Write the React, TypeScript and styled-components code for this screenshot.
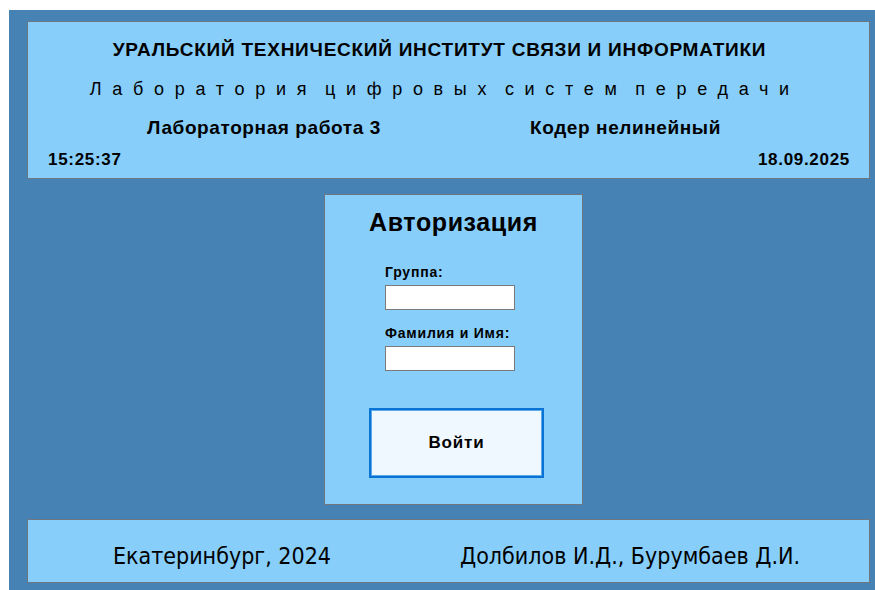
import styled, { createGlobalStyle } from "styled-components";

const GlobalStyle = createGlobalStyle`
  html, body {
    margin: 0;
    padding: 0;
    background: #ffffff;
  }
  body {
    font-family: "Liberation Sans", Arial, sans-serif;
    color: #000000;
  }
`;

const Screen = styled.div`
  width: 875px;
  height: 590px;
  padding: 10px 0 0 9px;
  box-sizing: border-box;
`;

const Window = styled.div`
  height: 580px;
  background: #4682b4;
  padding: 11px 5px 0 18px;
  box-sizing: border-box;
  display: flex;
  flex-direction: column;
`;

const Panel = styled.div`
  background: #87cefa;
  border: 1px solid #6d7680;
  box-sizing: border-box;
`;

const Header = styled(Panel)`
  height: 158px;
  display: flex;
  flex-direction: column;
`;

const CenterLine = styled.div<{ top: number }>`
  display: flex;
  justify-content: center;
  padding-right: 18px;
  margin-top: ${(p) => p.top}px;
  line-height: 20px;
  height: 20px;
  white-space: nowrap;
`;

const Institute = styled.div`
  font-size: 19px;
  font-weight: bold;
  letter-spacing: 0.75px;
`;

const Lab = styled.div`
  font-size: 18px;
  letter-spacing: 10.7px;
  word-spacing: -8px;
  margin-right: -10.7px;
`;

const WorkLine = styled.div`
  display: flex;
  padding-left: 119px;
  margin-top: 19px;
  height: 20px;
  line-height: 20px;
  font-size: 19px;
  font-weight: bold;
  letter-spacing: 0.6px;
  white-space: nowrap;
`;

const WorkName = styled.div<{ width: number }>`
  width: ${(p) => p.width}px;
`;

const StampLine = styled.div`
  display: flex;
  justify-content: space-between;
  padding: 0 19px 0 20px;
  margin-top: 13px;
  height: 18px;
  line-height: 18px;
  font-size: 17px;
  font-weight: bold;
  letter-spacing: 0.7px;
`;

const Middle = styled.div`
  margin: 15px 0 0 297px;
`;

const AuthBox = styled(Panel)`
  width: 259px;
  height: 311px;
  display: flex;
  flex-direction: column;
`;

const AuthTitle = styled.div`
  text-align: center;
  font-size: 25px;
  font-weight: bold;
  letter-spacing: 0.6px;
  margin-top: 12px;
  height: 30px;
  line-height: 30px;
`;

const Field = styled.div<{ top: number }>`
  display: flex;
  flex-direction: column;
  padding-left: 60px;
  margin-top: ${(p) => p.top}px;
`;

const Label = styled.label`
  font-size: 14px;
  font-weight: bold;
  letter-spacing: 0.8px;
  height: 15px;
  line-height: 15px;
  margin-bottom: 5px;
  white-space: nowrap;
`;

const TextInput = styled.input`
  width: 130px;
  height: 25px;
  box-sizing: border-box;
  border: 1px solid #7a7a7a;
  background: #ffffff;
  padding: 2px 4px;
  font-family: inherit;
  font-size: 13px;
  outline: none;
`;

const LoginButton = styled.button`
  align-self: flex-start;
  margin: 37px 0 0 44px;
  width: 175px;
  height: 70px;
  box-sizing: border-box;
  border: 2px solid #0a74d4;
  box-shadow: inset 0 0 0 1px #5aa9ec;
  background: #f0f8ff;
  font-family: inherit;
  font-size: 17px;
  font-weight: bold;
  letter-spacing: 0.8px;
  color: #000000;
  cursor: pointer;
`;

const Footer = styled(Panel)`
  margin-top: 14px;
  height: 64px;
  display: flex;
  align-items: flex-start;
  padding: 22px 0 0 85px;
  font-family: "DejaVu Sans Condensed", "Liberation Sans", Arial, sans-serif;
  font-stretch: condensed;
  font-size: 23px;
  line-height: 28px;
  white-space: nowrap;
`;

const FooterText = styled.div<{ width?: number }>`
  width: ${(p) => (p.width ? `${p.width}px` : "auto")};
`;

const App = () => {
  return (
    <>
      <GlobalStyle />
      <Screen>
        <Window>
          <Header>
            <CenterLine top={18}>
              <Institute>УРАЛЬСКИЙ ТЕХНИЧЕСКИЙ ИНСТИТУТ СВЯЗИ И ИНФОРМАТИКИ</Institute>
            </CenterLine>
            <CenterLine top={19}>
              <Lab>Лаборатория цифровых систем передачи</Lab>
            </CenterLine>
            <WorkLine>
              <WorkName width={383}>Лабораторная работа 3</WorkName>
              <WorkName width={220}>Кодер нелинейный</WorkName>
            </WorkLine>
            <StampLine>
              <span>15:25:37</span>
              <span>18.09.2025</span>
            </StampLine>
          </Header>

          <Middle>
            <AuthBox>
              <AuthTitle>Авторизация</AuthTitle>
              <Field top={28}>
                <Label htmlFor="group">Группа:</Label>
                <TextInput id="group" type="text" />
              </Field>
              <Field top={16}>
                <Label htmlFor="name">Фамилия и Имя:</Label>
                <TextInput id="name" type="text" />
              </Field>
              <LoginButton>Войти</LoginButton>
            </AuthBox>
          </Middle>

          <Footer>
            <FooterText width={347}>Екатеринбург, 2024</FooterText>
            <FooterText>Долбилов И.Д., Бурумбаев Д.И.</FooterText>
          </Footer>
        </Window>
      </Screen>
    </>
  );
};

export default App;
